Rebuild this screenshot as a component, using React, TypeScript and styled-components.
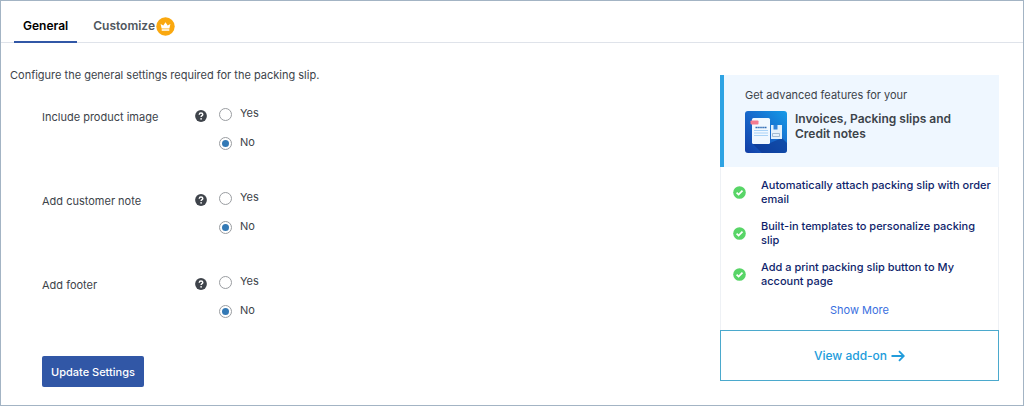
import React, { useState } from "react";
import styled, { createGlobalStyle } from "styled-components";

const GlobalStyle = createGlobalStyle`
  *, *::before, *::after { box-sizing: border-box; }
  body {
    margin: 0;
    background: #fff;
    color: #3c434a;
    font-family: Inter, "Liberation Sans", sans-serif;
    font-size: 11px;
    line-height: 14px;
  }
`;

const Page = styled.main`
  min-height: 100vh;
  border: 1px solid #a3b4c4;
`;

const Tabs = styled.nav`
  display: flex;
  gap: 7px;
  padding: 8px 13px 0;
  height: 42px;
  border-bottom: 1px solid #dfe3ea;
`;

const Tab = styled.a<{ $active?: boolean }>`
  display: flex;
  align-items: center;
  gap: 1px;
  height: 34px;
  padding: 2px 9px 0;
  border-bottom: 2px solid ${(p) => (p.$active ? "#3157a6" : "transparent")};
  color: ${(p) => (p.$active ? "#000" : "#50575e")};
  font-size: 12px;
  font-weight: 600;
  text-decoration: none;
`;

const Content = styled.div`
  display: flex;
  align-items: flex-start;
  justify-content: space-between;
  gap: 24px;
  padding: 25px 24px 16px 9px;
`;

const Form = styled.form`
  flex: 1;
`;

const Intro = styled.p`
  margin: 0 0 24px;
`;

const SettingList = styled.div`
  display: flex;
  flex-direction: column;
  gap: 39px;
  margin-bottom: 37px;
  padding-left: 32px;
`;

const Setting = styled.div`
  display: grid;
  grid-template-columns: 153px 24px 1fr;
`;

const SettingName = styled.span`
  padding-top: 3px;
  line-height: 16px;
`;

const Help = styled.span`
  padding-top: 4px;
  line-height: 0;
`;

const Options = styled.div`
  display: flex;
  flex-direction: column;
  gap: 13px;
`;

const Option = styled.label`
  display: flex;
  align-items: flex-start;
  gap: 8px;
  height: 16px;
`;

const Radio = styled.input`
  appearance: none;
  display: grid;
  place-items: center;
  width: 13px;
  height: 13px;
  margin: 2px 0 0;
  border: 1px solid #9a9da1;
  border-radius: 50%;
  background: #fff;

  &:checked::before {
    content: "";
    width: 7px;
    height: 7px;
    border-radius: 50%;
    background: #3379b5;
  }
`;

const SaveButton = styled.button`
  height: 31px;
  margin-left: 32px;
  padding: 0 9px;
  border: 0;
  border-radius: 2px;
  background: #3157a6;
  color: #fff;
  font: 500 11px/14px Inter, "Liberation Sans", sans-serif;
`;

const Promo = styled.aside`
  width: 279px;
  margin-top: 7px;
`;

const PromoHead = styled.header`
  padding: 13px 16px 14px 21px;
  border-left: 4px solid #2ea3e3;
  background: #eff7ff;
`;

const PromoTitle = styled.div`
  display: flex;
  gap: 8px;
  margin-top: 9px;
`;

const PromoName = styled.h2`
  margin: 0;
  font-size: 12px;
  font-weight: 600;
  line-height: 15px;
`;

const PromoBody = styled.div`
  display: flex;
  flex-direction: column;
  align-items: center;
  padding: 11px 4px 13px;
  border: solid #eef1f5;
  border-width: 0 1px;
`;

const Features = styled.ul`
  align-self: stretch;
  display: flex;
  flex-direction: column;
  gap: 13px;
  margin: 0 0 15px;
  padding: 0 0 0 8px;
  list-style: none;
`;

const Feature = styled.li`
  display: flex;
  align-items: center;
  gap: 15px;
  color: #0f1f6c;
  font-weight: 500;

  svg { flex-shrink: 0; }
`;

const ShowMore = styled.a`
  color: #3a6fe0;
  text-decoration: none;
`;

const AddonLink = styled.a`
  display: flex;
  align-items: center;
  justify-content: center;
  gap: 4px;
  height: 51px;
  border: 1px solid #4ba9cd;
  color: #229cdb;
  font-size: 12px;
  font-weight: 500;
  text-decoration: none;
`;

const Crown = () => (
  <svg width="19" height="19" viewBox="0 0 19 19" aria-hidden="true">
    <circle cx="9.5" cy="9.5" r="9.2" fill="#faa80f" />
    <path d="M5.6 11.6 4.6 6.9l2.7 1.7L9.5 5.2l2.2 3.4L14.4 6.9l-1 4.7zM5.7 12.2h7.600v1.500H5.700z" fill="#fff" />
  </svg>
);

const HelpIcon = () => (
  <svg width="12" height="12" viewBox="0 0 12 12" role="img" aria-label="Help">
    <circle cx="6" cy="6" r="5.9" fill="#3f444b" />
    <path d="M4.2 4.7C4.3 3.5 5 3 6 3s1.8.6 1.8 1.5C7.8 5.7 6.1 5.6 6.1 7" fill="none" stroke="#fff" strokeWidth="1.4" />
    <circle cx="6.1" cy="8.8" r=".85" fill="#fff" />
  </svg>
);

const CheckIcon = () => (
  <svg width="13" height="13" viewBox="0 0 13 13" aria-hidden="true">
    <circle cx="6.5" cy="6.5" r="6.3" fill="#58d567" />
    <path d="m3.6 6.6 2 2L9.5 4.700" fill="none" stroke="#fff" strokeWidth="1.7" />
  </svg>
);

const ArrowIcon = () => (
  <svg width="14" height="12" viewBox="0 0 14 12" aria-hidden="true">
    <path d="M.5 6h12.2M8 1.2 12.8 6 8 10.8" fill="none" stroke="currentColor" strokeWidth="1.8" />
  </svg>
);

const ProductLogo = () => (
  <svg width="42" height="42" viewBox="0 0 42 42" aria-hidden="true">
    <defs>
      <linearGradient id="tile" x1="1" y1="0" x2="0" y2="1">
        <stop offset="0" stopColor="#159be8" />
        <stop offset=".5" stopColor="#1768cb" />
        <stop offset="1" stopColor="#123da5" />
      </linearGradient>
      <clipPath id="tileClip"><rect width="42" height="42" rx="3" /></clipPath>
    </defs>
    <g clipPath="url(#tileClip)">
      <rect width="42" height="42" fill="url(#tile)" />
      <path d="M7 32 17 42h25V32l-5-5-12 5z" fill="#0c348e" opacity=".6" />
      <rect x="7" y="7" width="18" height="26" rx="1.5" fill="#f1f8ff" />
      <rect x="5.5" y="9.5" width="8" height="4" rx=".8" fill="#f47b91" />
      <path d="M10.5 16.5h11" stroke="#326db5" strokeWidth="1.5" strokeDasharray="1.5 .4" />
      <path d="M9 19.5h14M9 22h14M9 24.5h14" stroke="#a9d2f6" />
      <path d="M26 14h11v14H26z" fill="#e4f1fc" />
      <rect x="28.5" y="14" width="4" height="4.5" fill="#2f82d8" />
      <path d="M27.5 22.5h7v3h-7z" fill="none" stroke="#92adc8" strokeWidth=".8" />
    </g>
  </svg>
);

const settings = ["Include product image", "Add customer note", "Add footer"];
const features = [
  "Automatically attach packing slip with order email",
  "Built-in templates to personalize packing slip",
  "Add a print packing slip button to My account page",
];

function YesNoSetting({ name }: { name: string }) {
  const [value, setValue] = useState("No");
  return (
    <Setting role="radiogroup" aria-label={name}>
      <SettingName>{name}</SettingName>
      <Help><HelpIcon /></Help>
      <Options>
        {["Yes", "No"].map((option) => (
          <Option key={option}>
            <Radio type="radio" name={name} checked={value === option} onChange={() => setValue(option)} />
            {option}
          </Option>
        ))}
      </Options>
    </Setting>
  );
}

export default function App() {
  return (
    <>
      <GlobalStyle />
      <Page>
        <Tabs>
          <Tab href="#general" $active>General</Tab>
          <Tab href="#customize">Customize <Crown /></Tab>
        </Tabs>
        <Content>
          <Form onSubmit={(e) => e.preventDefault()}>
            <Intro>Configure the general settings required for the packing slip.</Intro>
            <SettingList>
              {settings.map((name) => <YesNoSetting key={name} name={name} />)}
            </SettingList>
            <SaveButton type="submit">Update Settings</SaveButton>
          </Form>
          <Promo>
            <PromoHead>
              Get advanced features for your
              <PromoTitle>
                <ProductLogo />
                <PromoName>Invoices, Packing slips and<br />Credit notes</PromoName>
              </PromoTitle>
            </PromoHead>
            <PromoBody>
              <Features>
                {features.map((text) => (
                  <Feature key={text}><CheckIcon /><span>{text}</span></Feature>
                ))}
              </Features>
              <ShowMore href="#more">Show More</ShowMore>
            </PromoBody>
            <AddonLink href="#addon">View add-on <ArrowIcon /></AddonLink>
          </Promo>
        </Content>
      </Page>
    </>
  );
}
